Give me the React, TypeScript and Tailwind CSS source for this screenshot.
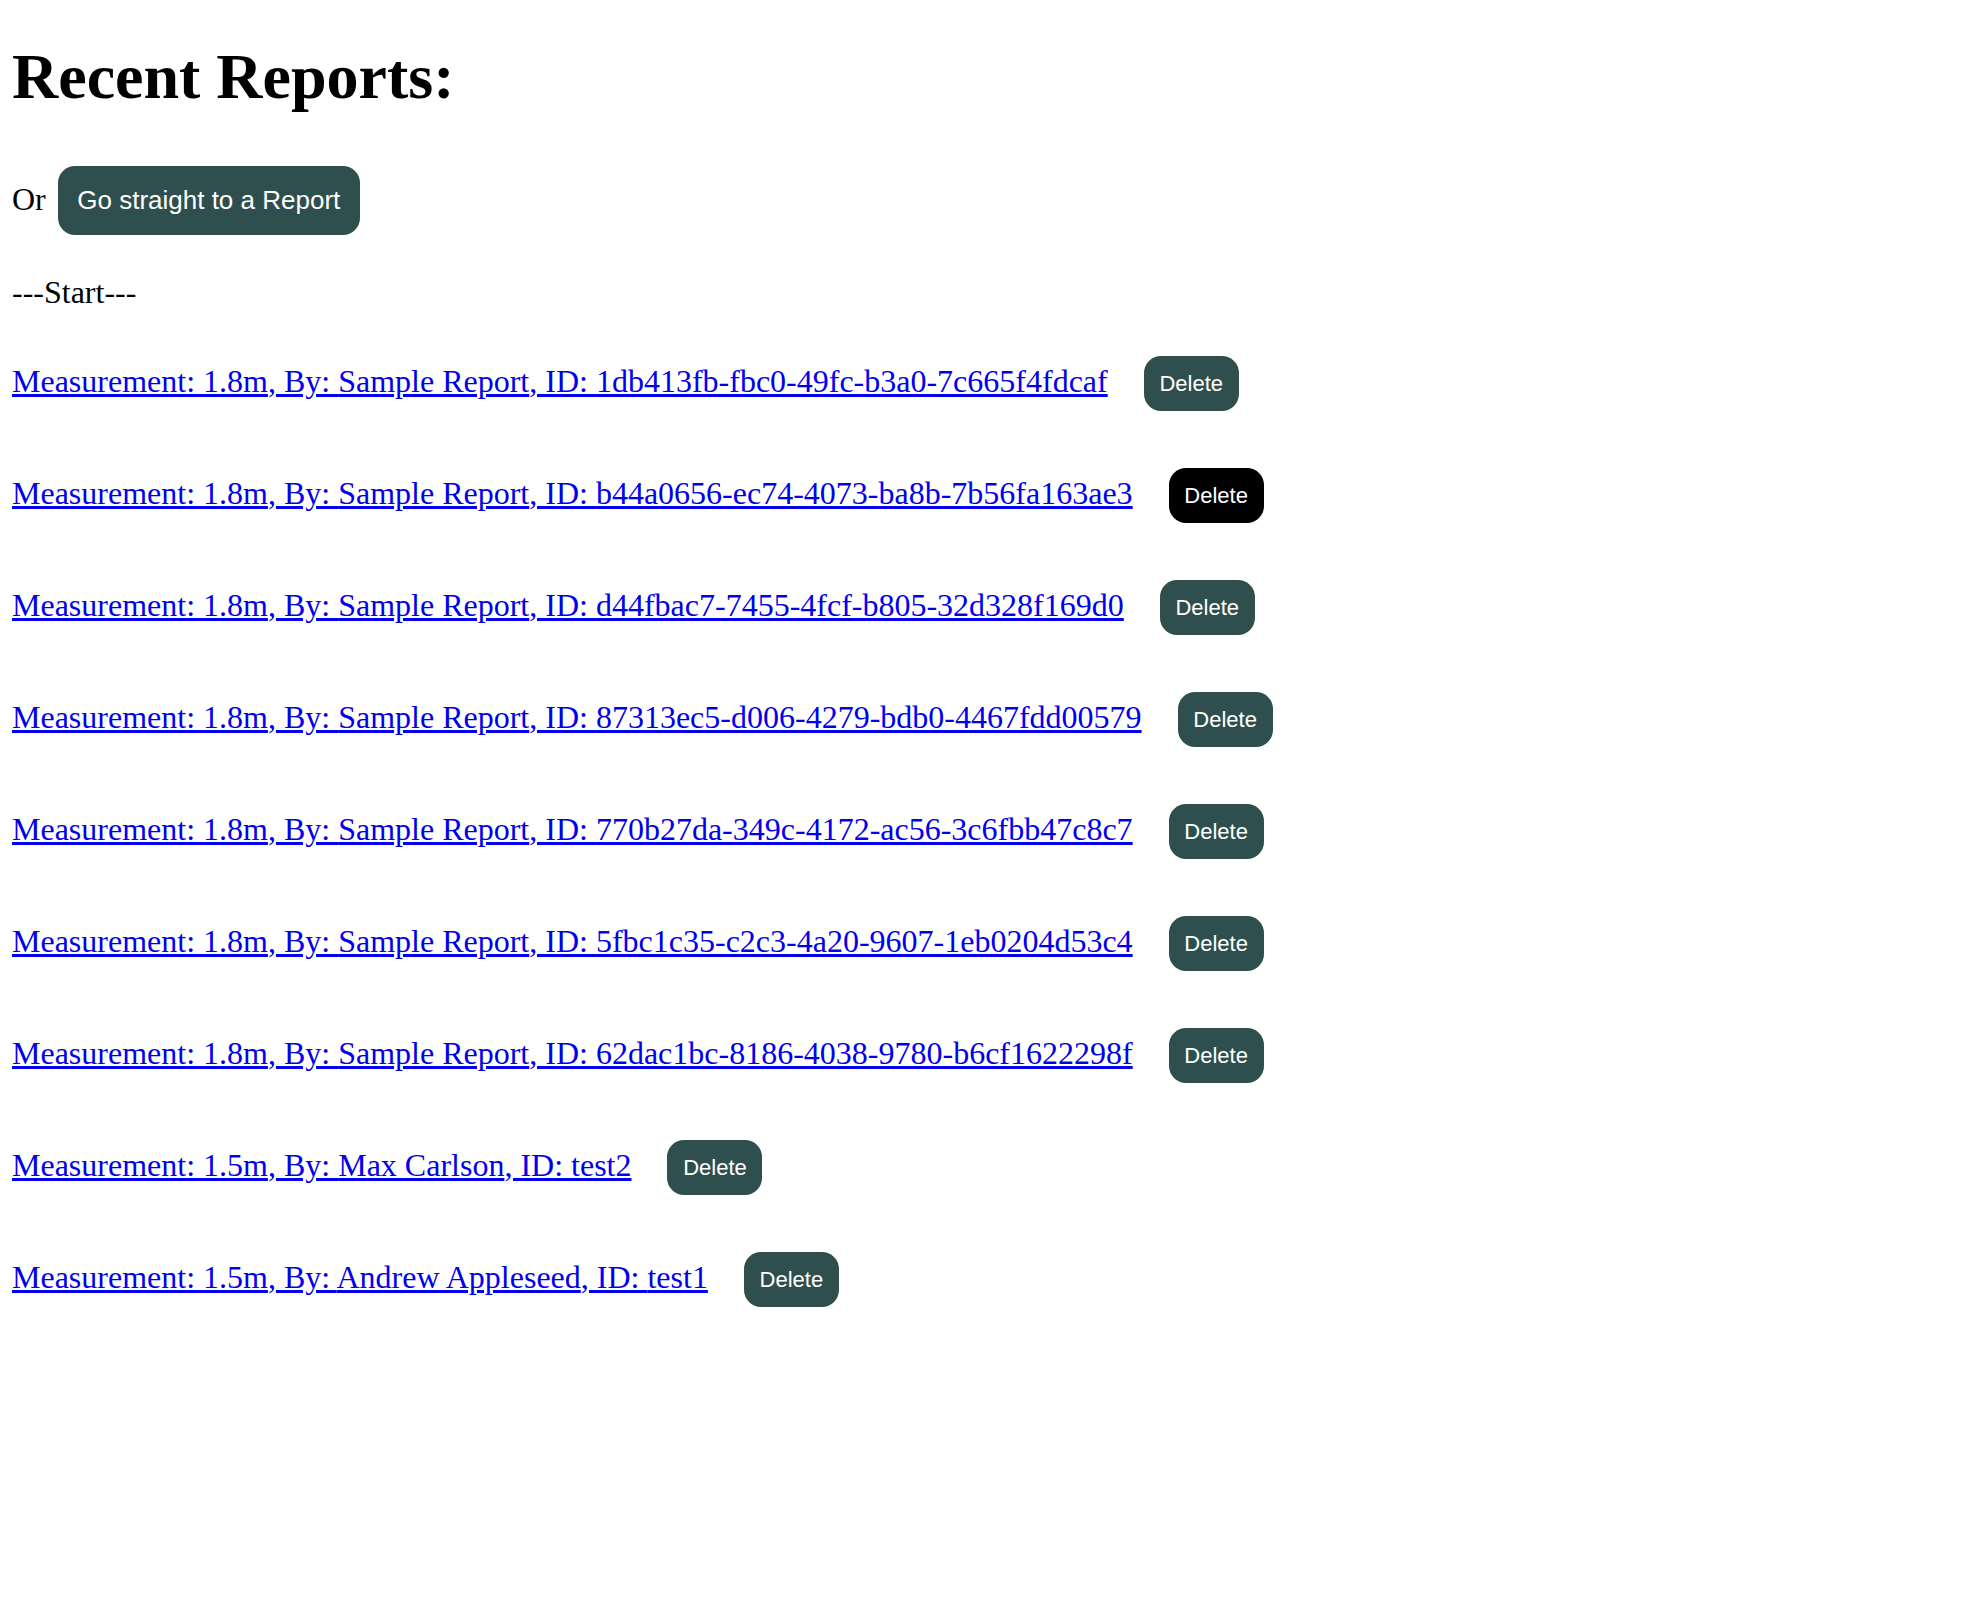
const reports = [
  { measurement: "1.8m", by: "Sample Report", id: "1db413fb-fbc0-49fc-b3a0-7c665f4fdcaf" },
  { measurement: "1.8m", by: "Sample Report", id: "b44a0656-ec74-4073-ba8b-7b56fa163ae3" },
  { measurement: "1.8m", by: "Sample Report", id: "d44fbac7-7455-4fcf-b805-32d328f169d0" },
  { measurement: "1.8m", by: "Sample Report", id: "87313ec5-d006-4279-bdb0-4467fdd00579" },
  { measurement: "1.8m", by: "Sample Report", id: "770b27da-349c-4172-ac56-3c6fbb47c8c7" },
  { measurement: "1.8m", by: "Sample Report", id: "5fbc1c35-c2c3-4a20-9607-1eb0204d53c4" },
  { measurement: "1.8m", by: "Sample Report", id: "62dac1bc-8186-4038-9780-b6cf1622298f" },
  { measurement: "1.5m", by: "Max Carlson", id: "test2" },
  { measurement: "1.5m", by: "Andrew Appleseed", id: "test1" },
];

function ReportRow({
  measurement,
  by,
  id,
  hovered,
}: {
  measurement: string;
  by: string;
  id: string;
  hovered?: boolean;
}) {
  return (
    <div className="flex items-center gap-[36px]">
      <a href="#" className="mb-[4px] text-[#0000ee] underline">
        Measurement: {measurement}, By: {by}, ID: {id}
      </a>
      <button
        className={
          "h-[55px] w-[95px] rounded-[17px] text-[22px] text-white font-['Liberation_Sans',Arial,sans-serif] " +
          (hovered ? "bg-black" : "bg-[#2f4f4f]")
        }
      >
        Delete
      </button>
    </div>
  );
}

export default function App() {
  return (
    <div className="min-h-screen bg-white pl-[12px] text-[32px] leading-[33px] text-black font-['Liberation_Serif','Times_New_Roman',serif]">
      <h1 className="pt-[39px] text-[64px] leading-[75px] font-bold">Recent Reports:</h1>

      <div className="mt-[52px] flex items-center gap-[12px]">
        <span className="mb-[2px]">Or</span>
        <button className="h-[69px] w-[302px] rounded-[17px] bg-[#2f4f4f] text-[26px] text-white font-['Liberation_Sans',Arial,sans-serif]">
          Go straight to a Report
        </button>
      </div>

      <p className="mt-[41px]">---Start---</p>

      <div className="mt-[47px] flex flex-col gap-[57px]">
        {reports.map((r, i) => (
          <ReportRow key={r.id} {...r} hovered={i === 1} />
        ))}
      </div>
    </div>
  );
}
